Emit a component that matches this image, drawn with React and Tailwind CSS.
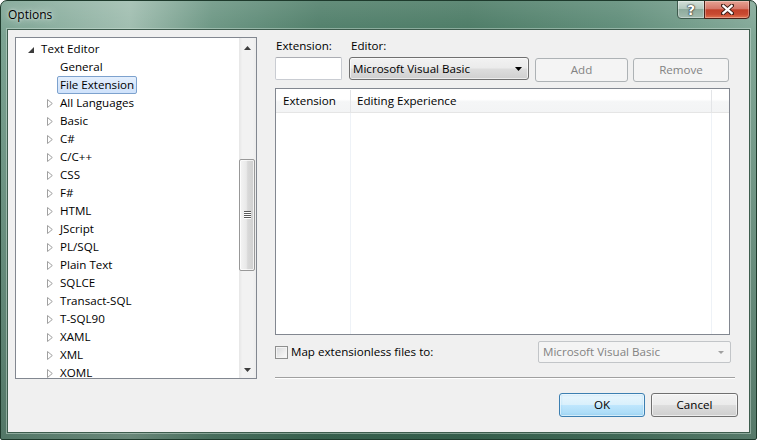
import React from "react";

const langs = ["All Languages","Basic","C#","C/C++","CSS","F#","HTML","JScript","PL/SQL","Plain Text","SQLCE","Transact-SQL","T-SQL90","XAML","XML","XOML"];

function OpenTri() {
  return (
    <svg width="6" height="6" viewBox="0 0 6 6" className="ml-[3px] mt-[1px]">
      <path d="M6 0V6H0Z" fill="#3c3c3c" />
    </svg>
  );
}
function ClosedTri() {
  return (
    <svg width="6" height="9" viewBox="0 0 6 9" className="ml-[3px]">
      <path d="M0.5 0.5L5.3 4.5L0.5 8.5Z" fill="#fff" stroke="#a0a0a0" />
    </svg>
  );
}

function Row({ label, level, exp, sel }) {
  return (
    <div className={`h-[18px] flex items-center ${level === 0 ? "pl-[9px]" : "pl-[28px]"}`}>
      <span className="w-[13px] h-[18px] flex items-center shrink-0">
        {exp === "open" && <OpenTri />}
        {exp === "closed" && <ClosedTri />}
      </span>
      <span
        className={`h-[18px] flex items-center px-[2px] border rounded-[2px] whitespace-nowrap ${
          sel
            ? "border-[#7da2ce] bg-[linear-gradient(180deg,#e4effd_0%,#cfe2fb_100%)]"
            : "border-transparent"
        }`}
      >
        {label}
      </span>
    </div>
  );
}

function ArrowSmall({ dir, color }) {
  return (
    <svg width="7" height="4" viewBox="0 0 7 4">
      {dir === "up" ? (
        <path d="M0 4L3.5 0L7 4Z" fill={color} />
      ) : (
        <path d="M0 0L3.5 4L7 0Z" fill={color} />
      )}
    </svg>
  );
}

export default function App() {
  return (
    <div className="w-[757px] h-[440px] bg-white font-['Open_Sans',sans-serif] text-[11.6px] leading-[16px] text-black">
      <div className="relative flex flex-col w-[757px] h-[440px] rounded-t-[7px] rounded-b-[2px] border border-[#1e3a2c] overflow-hidden bg-[linear-gradient(180deg,rgba(255,255,255,0.12)_0%,rgba(0,0,0,0)_8%,rgba(16,46,32,0.38)_100%),linear-gradient(90deg,#7ba392_0%,#9fbdaf_17%,#6a9582_28%,#4f7e69_42%,#4a7a64_62%,#5e8c78_82%,#82a897_100%)]">
        {/* Title bar */}
        <div className="h-[28px] flex items-start pr-[6px]">
          <div className="pl-[7px] h-[28px] flex items-center text-[12px] [text-shadow:0_0_8px_rgba(255,255,255,0.9),0_0_3px_rgba(255,255,255,0.7)]">
            Options
          </div>
          <div className="flex-1" />
          <div className="flex -mt-[1px]">
            <div className="w-[28px] h-[19px] flex items-center justify-center rounded-bl-[4px] border border-[#3e5a4d] bg-[linear-gradient(180deg,#d3e0da_0%,#b4c9bf_45%,#8eab9d_50%,#a3bcb0_100%)] shadow-[inset_0_0_0_1px_rgba(255,255,255,0.35)]">
              <span className="text-white font-bold text-[14px] leading-[14px] font-['DejaVu_Sans',sans-serif] [text-shadow:0_0_1px_#222,0_0_1px_#222,0_0_2px_#333]">?</span>
            </div>
            <div className="w-[46px] h-[19px] -ml-[1px] flex items-center justify-center rounded-br-[4px] border border-[#4a2118] bg-[linear-gradient(180deg,#e6a393_0%,#d6786a_45%,#c2412a_52%,#c84a31_78%,#e27450_100%)] shadow-[inset_0_0_0_1px_rgba(255,255,255,0.3)]">
              <svg width="13" height="11" viewBox="0 0 13 11">
                <path d="M2 1.5L11 9.5M11 1.5L2 9.5" stroke="#3a1a12" strokeWidth="4" strokeLinecap="square" />
                <path d="M2.3 1.8L10.7 9.2M10.7 1.8L2.3 9.2" stroke="#fff" strokeWidth="2.2" strokeLinecap="square" />
              </svg>
            </div>
          </div>
        </div>

        {/* Client area */}
        <div className="flex-1 mx-[6px] mb-[6px] border border-[#3d5c4d] shadow-[0_0_0_1px_rgba(210,228,219,0.45)] bg-[#f0f0f0] flex flex-col pl-[7px] pt-[7px]">
          <div className="flex items-start">
            {/* Tree */}
            <div className="w-[242px] h-[342px] border border-[#828790] bg-white flex">
              <div className="flex-1 overflow-hidden pt-[2px]">
                <Row label="Text Editor" level={0} exp="open" />
                <Row label="General" level={1} />
                <Row label="File Extension" level={1} sel />
                {langs.map((l) => (
                  <Row key={l} label={l} level={1} exp="closed" />
                ))}
              </div>
              <div className="w-[17px] flex flex-col bg-[linear-gradient(90deg,#e6e6e6_0%,#f2f2f2_20%,#f2f2f2_80%,#ececec_100%)]">
                <div className="h-[17px] flex items-center justify-center pt-[2px]">
                  <ArrowSmall dir="up" color="#3d3d3d" />
                </div>
                <div className="h-[104px]" />
                <div className="h-[112px] w-[16px] rounded-[2px] border border-[#989898] bg-[linear-gradient(90deg,#f4f4f4_0%,#e9e9e9_45%,#d9d9d9_55%,#cfcfcf_100%)] shadow-[inset_0_0_0_1px_rgba(255,255,255,0.7)] flex items-center justify-center">
                  <svg width="7" height="8" viewBox="0 0 7 8">
                    <path d="M0 0.5H7M0 2.5H7M0 4.5H7M0 6.5H7" stroke="#595959" strokeWidth="1" />
                    <path d="M0 1.5H7M0 3.5H7M0 5.5H7M0 7.5H7" stroke="#ffffff" strokeWidth="1" />
                  </svg>
                </div>
                <div className="flex-1" />
                <div className="h-[17px] flex items-center justify-center">
                  <ArrowSmall dir="down" color="#3d3d3d" />
                </div>
              </div>
            </div>

            {/* Right column */}
            <div className="ml-[18px] w-[460px] flex flex-col">
              <div className="mt-[1px] h-[16px] flex">
                <span className="w-[75px] pl-[1px]">Extension:</span>
                <span className="pl-[1px]">Editor:</span>
              </div>
              <div className="mt-[3px] flex items-start">
                <div className="w-[67px] h-[23px] rounded-[2px] border border-[#c9ccd2] border-t-[#abadb3] bg-white" />
                <div className="ml-[7px] w-[180px] h-[23px] rounded-[3px] border border-[#707070] bg-[linear-gradient(180deg,#f2f2f2_0%,#ebebeb_48%,#dddddd_52%,#cfcfcf_100%)] shadow-[inset_0_0_0_1px_rgba(255,255,255,0.6)] flex items-center justify-between pl-[3px] pr-[6px]">
                  <span className="whitespace-nowrap">Microsoft Visual Basic</span>
                  <ArrowSmall dir="down" color="#000" />
                </div>
                <div className="ml-[6px] mt-[1px] w-[93px] h-[24px] rounded-[3px] border border-[#adb2b5] bg-[#f4f4f4] text-[#838383] flex items-center justify-center">
                  Add
                </div>
                <div className="ml-[5px] mt-[1px] w-[96px] h-[24px] rounded-[3px] border border-[#adb2b5] bg-[#f4f4f4] text-[#838383] flex items-center justify-center">
                  Remove
                </div>
              </div>

              {/* List view */}
              <div className="mt-[6px] w-[455px] h-[247px] border border-[#828790] bg-white flex flex-col">
                <div className="h-[24px] pt-[1px] flex border-b border-[#e5e5e5] bg-[linear-gradient(180deg,#ffffff_0%,#ffffff_45%,#f5f6f7_55%,#f3f4f5_100%)]">
                  <div className="w-[75px] pl-[7px] flex items-center border-r border-[#e3e5e8]">Extension</div>
                  <div className="w-[361px] pl-[6px] flex items-center border-r border-[#e3e5e8]">Editing Experience</div>
                  <div className="flex-1" />
                </div>
                <div className="flex-1 flex">
                  <div className="w-[75px] border-r border-[#eef2f7]" />
                  <div className="w-[361px] border-r border-[#eef2f7]" />
                  <div className="flex-1" />
                </div>
              </div>

              {/* Checkbox row */}
              <div className="mt-[6px] w-[456px] h-[22px] flex items-center justify-between">
                <div className="flex items-center">
                  <div className="w-[13px] h-[13px] border border-[#8e8f8f] bg-[linear-gradient(135deg,#d6d8db_0%,#eeeeee_60%,#fbfbfb_100%)] shadow-[inset_0_0_0_1px_#f4f4f4]" />
                  <span className="ml-[3px] whitespace-nowrap">Map extensionless files to:</span>
                </div>
                <div className="w-[193px] h-[22px] rounded-[2px] border border-[#c2c5c8] bg-[#f4f4f4] flex items-center justify-between pl-[4px] pr-[6px] text-[#838383]">
                  <span className="whitespace-nowrap">Microsoft Visual Basic</span>
                  <svg width="6" height="3" viewBox="0 0 6 3">
                    <path d="M0 0L3 3L6 0Z" fill="#a0a0a0" />
                  </svg>
                </div>
              </div>

              <div className="mt-[14px] w-[460px] h-0 border-t border-[#a0a0a0] border-b border-b-white" />
            </div>
          </div>

          {/* Bottom buttons */}
          <div className="mt-[14px] flex justify-end pr-[11px]">
            <div className="w-[86px] h-[24px] rounded-[3px] border border-[#3c7fb1] bg-[linear-gradient(180deg,#eaf6fd_0%,#d9f0fc_48%,#bee6fd_52%,#a7d9f5_100%)] shadow-[inset_0_0_0_1px_rgba(255,255,255,0.6),inset_0_0_3px_rgba(70,180,240,0.5)] flex items-center justify-center">
              OK
            </div>
            <div className="ml-[6px] w-[87px] h-[24px] rounded-[3px] border border-[#707070] bg-[linear-gradient(180deg,#f2f2f2_0%,#ebebeb_48%,#dddddd_52%,#cfcfcf_100%)] shadow-[inset_0_0_0_1px_rgba(255,255,255,0.6)] flex items-center justify-center">
              Cancel
            </div>
          </div>
        </div>
      </div>
    </div>
  );
}
